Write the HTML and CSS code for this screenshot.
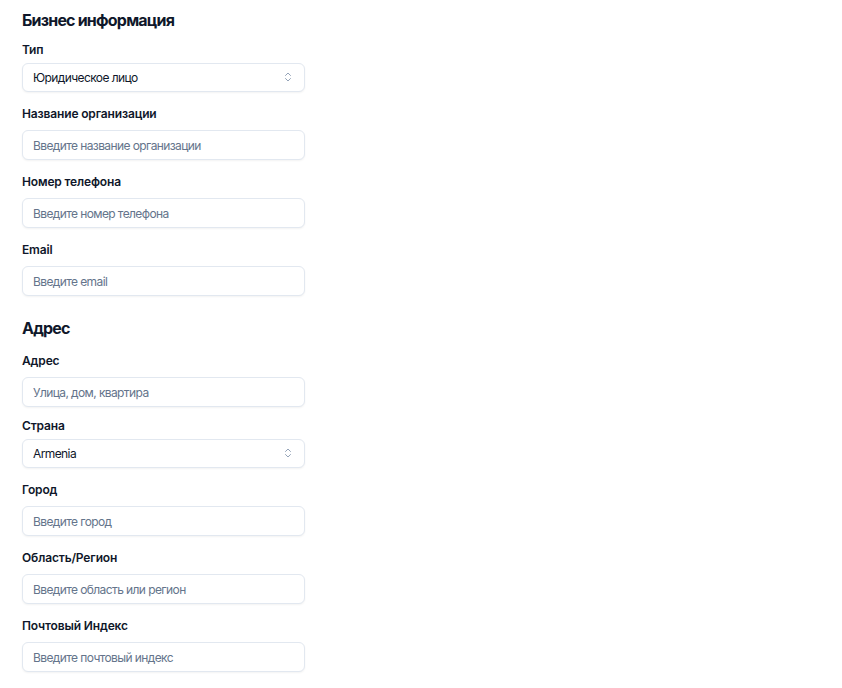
FILE: index.html
```html
<!DOCTYPE html>
<html lang="ru">
<head>
    <meta charset="UTF-8">
    <meta name="viewport" content="width=device-width, initial-scale=1.0">
    <title>Бизнес информация</title>
    <link rel="stylesheet" href="styles.css">
</head>
<body>
    <form class="business-form">
        <section class="form-section">
            <h2>Бизнес информация</h2>

            <div class="field field-select">
                <label for="type">Тип</label>
                <div class="select-wrap">
                    <select id="type" name="type">
                        <option>Юридическое лицо</option>
                        <option>Физическое лицо</option>
                    </select>
                    <svg class="select-icon" viewBox="0 0 24 24" width="12" height="12" fill="none" stroke="currentColor" stroke-width="2" stroke-linecap="round" stroke-linejoin="round"><path d="m7 15 5 5 5-5"/><path d="m7 9 5-5 5 5"/></svg>
                </div>
            </div>

            <div class="field">
                <label for="org">Название организации</label>
                <input type="text" id="org" name="org" placeholder="Введите название организации">
            </div>

            <div class="field">
                <label for="phone">Номер телефона</label>
                <input type="text" id="phone" name="phone" placeholder="Введите номер телефона">
            </div>

            <div class="field">
                <label for="email">Email</label>
                <input type="text" id="email" name="email" placeholder="Введите email">
            </div>
        </section>

        <section class="form-section">
            <h2>Адрес</h2>

            <div class="field field-tight">
                <label for="address">Адрес</label>
                <input type="text" id="address" name="address" placeholder="Улица, дом, квартира">
            </div>

            <div class="field field-select">
                <label for="country">Страна</label>
                <div class="select-wrap">
                    <select id="country" name="country">
                        <option>Armenia</option>
                        <option>Georgia</option>
                    </select>
                    <svg class="select-icon" viewBox="0 0 24 24" width="12" height="12" fill="none" stroke="currentColor" stroke-width="2" stroke-linecap="round" stroke-linejoin="round"><path d="m7 15 5 5 5-5"/><path d="m7 9 5-5 5 5"/></svg>
                </div>
            </div>

            <div class="field">
                <label for="city">Город</label>
                <input type="text" id="city" name="city" placeholder="Введите город">
            </div>

            <div class="field">
                <label for="region">Область/Регион</label>
                <input type="text" id="region" name="region" placeholder="Введите область или регион">
            </div>

            <div class="field">
                <label for="zip">Почтовый Индекс</label>
                <input type="text" id="zip" name="zip" placeholder="Введите почтовый индекс">
            </div>
        </section>
    </form>
</body>
</html>
```

FILE: styles.css
```css
body {
    font-family: Inter, "Noto Sans", sans-serif;
    background-color: #fff;
    color: #0f172a;
    margin: 0;
    padding: 8px 22px 0;
}

.business-form {
    width: 283px;
}

.form-section + .form-section {
    margin-top: 20px;
}

.form-section h2 {
    font-size: 16px;
    line-height: 24px;
    font-weight: 700;
    letter-spacing: -0.8px;
    margin: 0 0 10px;
}

.form-section + .form-section h2 {
    margin-bottom: 13px;
}

.field {
    margin-bottom: 14px;
}

.field-tight {
    margin-bottom: 11px;
}

.field label {
    display: block;
    font-size: 12px;
    line-height: 16px;
    font-weight: 600;
    letter-spacing: -0.15px;
    margin-bottom: 8px;
}

.field-select label {
    margin-bottom: 5px;
}

.field input,
.field select {
    display: block;
    box-sizing: border-box;
    width: 100%;
    height: 30px;
    padding: 0 10px;
    border: 1px solid #e2e8f0;
    border-radius: 6px;
    background-color: #fff;
    box-shadow: 0 1px 2px rgba(0, 0, 0, 0.05);
    font-family: inherit;
    font-size: 12px;
    letter-spacing: -0.6px;
    color: #0f172a;
    outline: none;
}

.field input::placeholder {
    color: #64748b;
}

.select-wrap {
    position: relative;
}

.field select {
    height: 29px;
    appearance: none;
    -webkit-appearance: none;
}

.select-icon {
    position: absolute;
    right: 11px;
    top: 8px;
    color: #94a3b8;
    pointer-events: none;
}
```
